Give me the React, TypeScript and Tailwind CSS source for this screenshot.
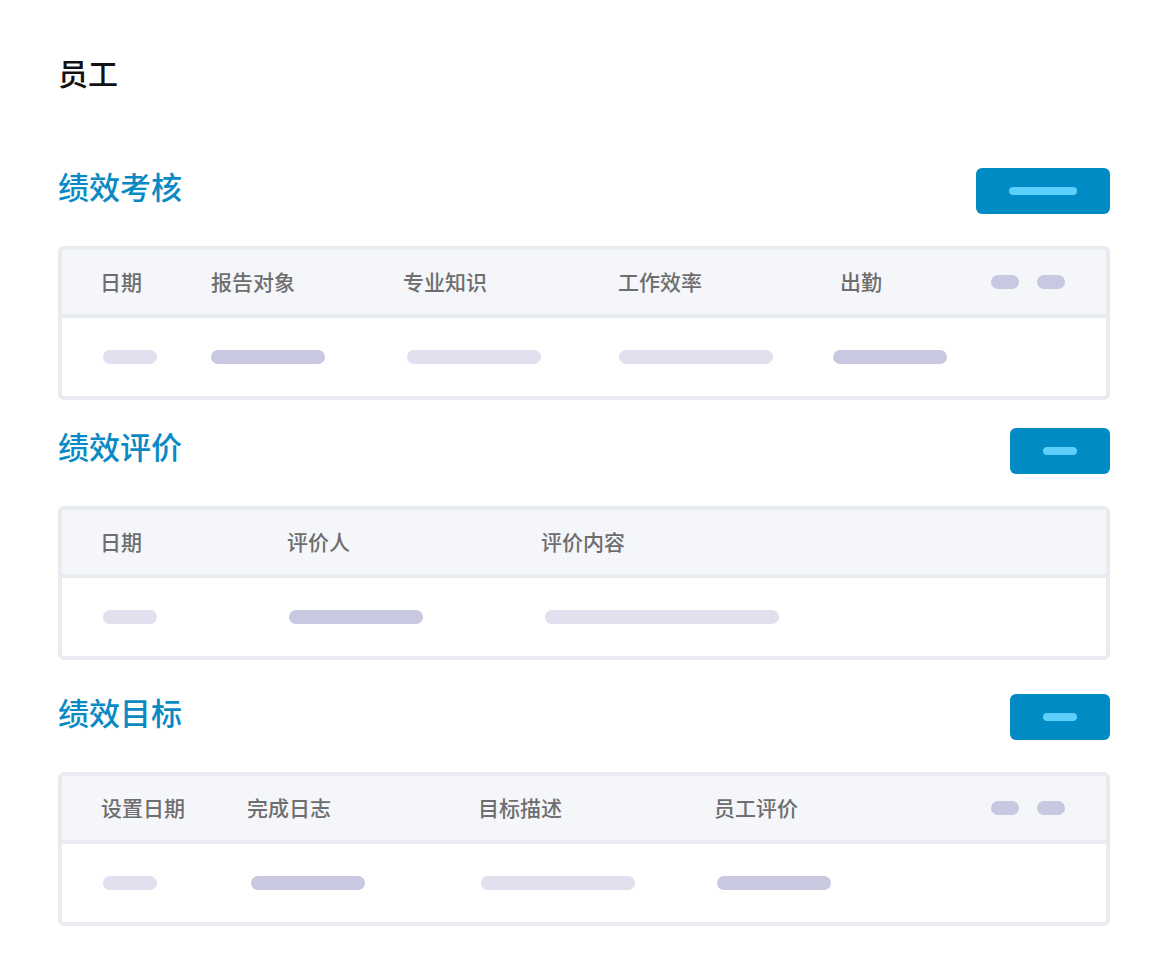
const font = { fontFamily: '"Noto Sans CJK SC", "Noto Sans", sans-serif' };

type Bar = { w: string; tone: "light" | "dark" };

function Skel({ w, tone }: Bar) {
  return (
    <div
      className={`h-[14px] rounded-full ${w} ${tone === "dark" ? "bg-[#c8c9e0]" : "bg-[#e0e0ee]"}`}
    />
  );
}

function Section({
  title,
  btnWide,
  children,
  className = "",
}: {
  title: string;
  btnWide?: boolean;
  children: React.ReactNode;
  className?: string;
}) {
  return (
    <section className={className}>
      <div className="flex items-start justify-between">
        <h2 className="text-[31px] leading-[36px] font-medium text-[#0a8ac4]">{title}</h2>
        <button
          className={`h-[46px] rounded-md bg-[#008bc4] flex items-center justify-center ${
            btnWide ? "w-[134px]" : "w-[100px]"
          }`}
        >
          <span className={`h-[8px] rounded-full bg-[#5ccffd] ${btnWide ? "w-[68px]" : "w-[34px]"}`} />
        </button>
      </div>
      <div className="mt-[32px] rounded-md border-4 border-[#e8ecf0] overflow-hidden bg-white">
        {children}
      </div>
    </section>
  );
}

function Pills() {
  return (
    <div className="ml-auto mr-[41px] flex gap-[18px]">
      <span className="w-[28px] h-[14px] rounded-full bg-[#c8c9e0]" />
      <span className="w-[28px] h-[14px] rounded-full bg-[#c8c9e0]" />
    </div>
  );
}

function HeadRow({ children, pl }: { children: React.ReactNode; pl: string }) {
  return (
    <div
      className={`h-[68px] bg-[#f5f6fa] border-b-4 border-[#e8ecf0] flex items-center ${pl} text-[21px] font-medium text-[#6e6e6e]`}
    >
      {children}
    </div>
  );
}

function BodyRow({ children }: { children: React.ReactNode }) {
  return <div className="h-[78px] flex items-center pl-[41px]">{children}</div>;
}

export default function App() {
  return (
    <div className="min-h-screen bg-white pl-[58px] pr-[60px] pt-[50px] pb-[50px]" style={font}>
      <h1 className="text-[30px] leading-[44px] font-medium text-[#111111] mb-[74px]">员工</h1>

      <Section title="绩效考核" btnWide className="mb-[28px]">
        <HeadRow pl="pl-[38px]">
          <div className="w-[111px]">日期</div>
          <div className="w-[192px]">报告对象</div>
          <div className="w-[215px]">专业知识</div>
          <div className="w-[222px]">工作效率</div>
          <div className="w-[151px]">出勤</div>
          <Pills />
        </HeadRow>
        <BodyRow>
          <div className="w-[108px]"><Skel w="w-[54px]" tone="light" /></div>
          <div className="w-[196px]"><Skel w="w-[114px]" tone="dark" /></div>
          <div className="w-[212px]"><Skel w="w-[134px]" tone="light" /></div>
          <div className="w-[214px]"><Skel w="w-[154px]" tone="light" /></div>
          <div><Skel w="w-[114px]" tone="dark" /></div>
        </BodyRow>
      </Section>

      <Section title="绩效评价" className="mb-[34px]">
        <HeadRow pl="pl-[38px]">
          <div className="w-[187px]">日期</div>
          <div className="w-[254px]">评价人</div>
          <div>评价内容</div>
        </HeadRow>
        <BodyRow>
          <div className="w-[186px]"><Skel w="w-[54px]" tone="light" /></div>
          <div className="w-[256px]"><Skel w="w-[134px]" tone="dark" /></div>
          <div><Skel w="w-[234px]" tone="light" /></div>
        </BodyRow>
      </Section>

      <Section title="绩效目标">
        <HeadRow pl="pl-[39px]">
          <div className="w-[146px]">设置日期</div>
          <div className="w-[231px]">完成日志</div>
          <div className="w-[236px]">目标描述</div>
          <div>员工评价</div>
          <Pills />
        </HeadRow>
        <BodyRow>
          <div className="w-[148px]"><Skel w="w-[54px]" tone="light" /></div>
          <div className="w-[230px]"><Skel w="w-[114px]" tone="dark" /></div>
          <div className="w-[236px]"><Skel w="w-[154px]" tone="light" /></div>
          <div><Skel w="w-[114px]" tone="dark" /></div>
        </BodyRow>
      </Section>
    </div>
  );
}
